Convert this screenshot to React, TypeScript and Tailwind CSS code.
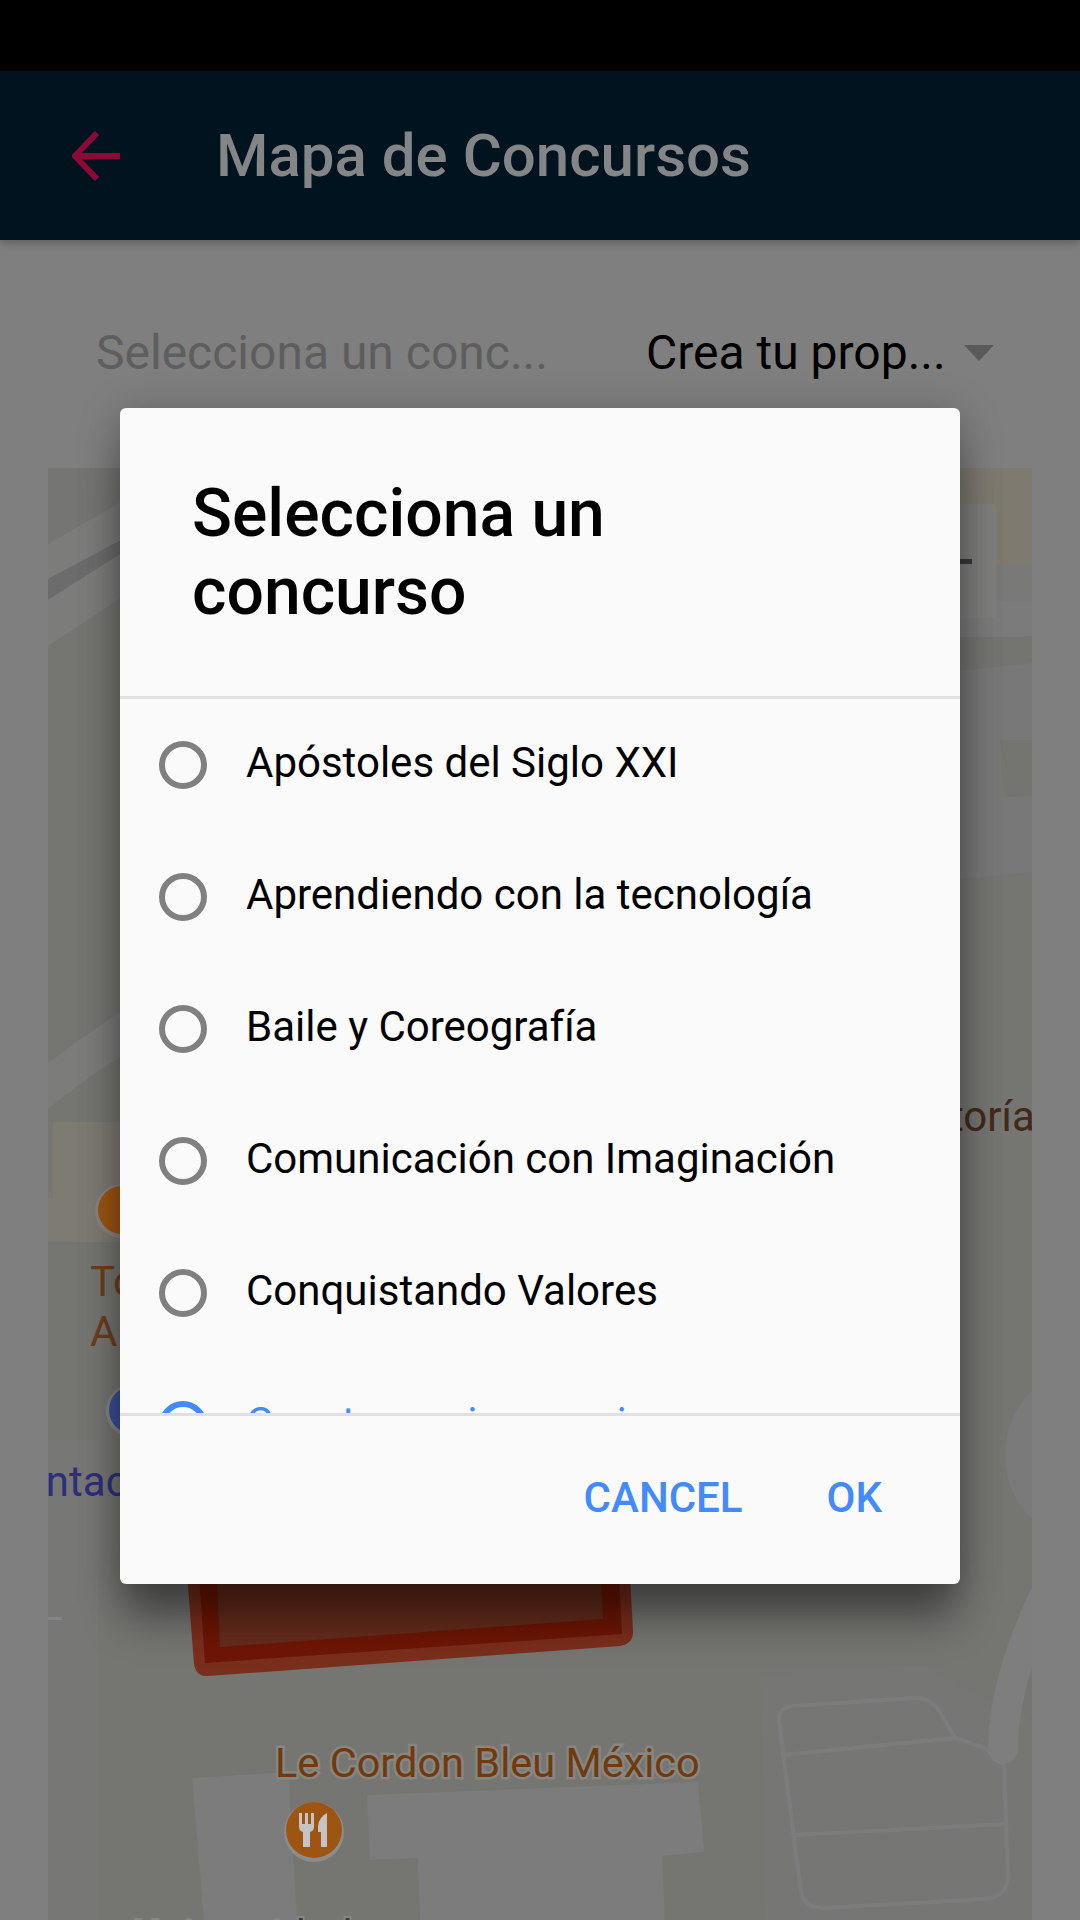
const font = { fontFamily: "Roboto, sans-serif" };

const contests = [
  "Apóstoles del Siglo XXI",
  "Aprendiendo con la tecnología",
  "Baile y Coreografía",
  "Comunicación con Imaginación",
  "Conquistando Valores",
];

function Radio({ selected }: { selected?: boolean }) {
  return (
    <span
      className={`flex h-[48px] w-[48px] shrink-0 items-center justify-center rounded-full border-[6px] ${
        selected ? "border-[#448aff]" : "border-[#808080]"
      }`}
    >
      {selected && <span className="h-[24px] w-[24px] rounded-full bg-[#448aff]" />}
    </span>
  );
}

function MapCanvas() {
  return (
    <svg viewBox="48 468 984 1452" className="h-full w-full" style={font}>
      <rect x="48" y="468" width="984" height="1452" fill="#757572" />

      {/* top left roads */}
      <path d="M48 468H125V500L48 544Z" fill="#757574" />
      <path d="M48 544L125 500V538L48 579Z" fill="#7c7c7b" />
      <path d="M48 579L125 538V551L48 600Z" fill="#6c6c6c" />
      <path d="M48 600L125 551V595L48 646Z" fill="#7c7c7b" />
      <path d="M48 1063Q85 1035 125 1009V1054Q85 1078 48 1109Z" fill="#7c7c7b" />

      {/* left road */}
      <rect x="48" y="1440" width="50" height="480" fill="#777775" />
      <rect x="48" y="1617" width="14" height="3" fill="#858585" />

      {/* left block and pins */}
      <rect x="48" y="1122" width="90" height="120" fill="#7e7b73" />
      <rect x="48" y="1122" width="5" height="76" fill="#787873" />
      <circle cx="122" cy="1211" r="27" fill="#868686" />
      <circle cx="122" cy="1210" r="24" fill="#9e5512" />
      <text x="90" y="1296" fontSize="42" fill="#6c3e1c">To</text>
      <text x="90" y="1346" fontSize="42" fill="#6c3e1c">A</text>
      <circle cx="133" cy="1411" r="27" fill="#868686" />
      <circle cx="133" cy="1410" r="24" fill="#3b4f99" />
      <text x="23" y="1496" fontSize="42" fill="#2c2f7c">antac</text>

      {/* top right */}
      <rect x="950" y="468" width="82" height="96" fill="#7e7a70" />
      <rect x="950" y="563" width="82" height="38" fill="#797a77" />
      <rect x="950" y="601" width="82" height="36" fill="#7b7b7c" />
      <path d="M950 640L1032 636V663L950 672Z" fill="#747471" />
      <path d="M950 672L1032 663V872L950 880Z" fill="#787878" />
      <path d="M1000 740H1032V796L1004 797Z" fill="#747471" />
      <rect x="940" y="504" width="56" height="114" rx="4" fill="#7e7e7d" />
      <rect x="950" y="559" width="22" height="5" fill="#3a3a3a" />
      <text x="950" y="1131" fontSize="42" fill="#42291a">toría</text>
      <circle cx="1095" cy="1455" r="90" fill="#7a7a7a" />

      {/* red building */}
      <path d="M186 1560H629L633 1630Q634 1644 620 1646L208 1676Q196 1677 194 1664Z" fill="#7a2e1c" />
      <path d="M198 1560H618L622 1634L205 1663Z" fill="#6e1605" />
      <path d="M216 1560H600L603 1619L220 1647Z" fill="#642c1c" />

      {/* lower buildings */}
      <path d="M192 1778L288 1772L297 1920H204Z" fill="#7c7c7c" />
      <path d="M367 1795L698 1782L704 1852L662 1856L665 1920H420L418 1858L370 1860Z" fill="#7c7c7c" />
      <path d="M760 1675L923 1665L1032 1720V1920H765Z" fill="#767675" />
      <path
        d="M792 1706L915 1698Q930 1697 940 1712L955 1738L985 1748L1004 1765L1008 1875Q1008 1897 985 1899L825 1908Q805 1909 801 1892L779 1722Q778 1708 792 1706Z"
        fill="none"
        stroke="#7c7c7c"
        strokeWidth="4"
      />
      <path d="M783 1755L955 1738M795 1835L1006 1824" fill="none" stroke="#7c7c7c" strokeWidth="4" />
      <path d="M1042 1600C1020 1650 1003 1700 1003 1749" fill="none" stroke="#7e7e7e" strokeWidth="30" strokeLinecap="round" />

      {/* restaurant label */}
      <text
        x="275"
        y="1777"
        fontSize="41.5"
        fill="#703a0e"
        stroke="#868682"
        strokeWidth="5"
        style={{ paintOrder: "stroke" }}
      >
        Le Cordon Bleu México
      </text>
      <circle cx="314" cy="1832" r="30" fill="#8c8c8c" />
      <circle cx="314" cy="1830" r="28" fill="#9e5512" />
      <path
        d="M299 1813H302V1824H305V1813H308V1824H311V1813H314V1827Q314 1831 310 1832V1847H303V1832Q299 1831 299 1827Z"
        fill="#c4c4c4"
      />
      <path d="M327 1813V1847H321V1832H318V1826Q319 1817 327 1813Z" fill="#c4c4c4" />
      <text
        x="133"
        y="1950"
        fontSize="42"
        fill="#3a3a3a"
        stroke="#868682"
        strokeWidth="4"
        style={{ paintOrder: "stroke" }}
      >
        Universidad
      </text>
    </svg>
  );
}

export default function App() {
  return (
    <div className="relative flex h-[1920px] w-[1080px] flex-col overflow-hidden bg-[#7f7f7f]" style={font}>
      <div className="h-[71px] shrink-0 bg-black" />

      <header className="flex h-[169px] shrink-0 items-center bg-[#00131f] shadow-[0_3px_8px_rgba(0,0,0,0.25)]">
        <svg viewBox="0 0 48 50" className="ml-[72px] h-[50px] w-[48px]" fill="none" stroke="#8c0a36" strokeWidth="6">
          <path d="M48 25H4" />
          <path d="M25 2L3 25L25 48" />
        </svg>
        <h1 className="ml-[96px] text-[60px] font-medium leading-none text-[#838587]">Mapa de Concursos</h1>
      </header>

      <div className="flex h-[228px] shrink-0 items-center pb-[2px]">
        <span className="ml-[96px] w-[550px] text-[48px] leading-none text-[#5e5e5e]">Selecciona un conc...</span>
        <span className="text-[48px] leading-none text-black">Crea tu prop...</span>
        <span className="ml-[18px] h-0 w-0 border-x-[15px] border-t-[16px] border-x-transparent border-t-[#5a5a5a]" />
      </div>

      <div className="mx-[48px] min-h-0 flex-1 overflow-hidden">
        <MapCanvas />
      </div>

      <div className="absolute left-[120px] top-[408px] flex h-[1176px] w-[840px] flex-col rounded-[6px] bg-[#fafafa] shadow-[0_40px_40px_-6px_rgba(0,0,0,0.38),0_6px_40px_0_rgba(0,0,0,0.25)]">
        <h2 className="h-[288px] shrink-0 pl-[72px] pr-[200px] pt-[67px] text-[66px] font-medium leading-[78px] text-black">
          Selecciona un concurso
        </h2>
        <div className="h-[3px] shrink-0 bg-[#e0e0e0]" />
        <ul className="min-h-0 flex-1 overflow-hidden">
          {contests.map((name) => (
            <li key={name} className="flex h-[132px] items-center pl-[39px]">
              <Radio />
              <span className="mb-[4px] ml-[39px] text-[42px] leading-none text-black">{name}</span>
            </li>
          ))}
          <li className="flex h-[132px] items-center pl-[39px]">
            <Radio selected />
            <span className="mb-[4px] ml-[39px] text-[42px] leading-none text-[#448aff]">Cuentos en imagen inmensa</span>
          </li>
        </ul>
        <div className="h-[3px] shrink-0 bg-[#e0e0e0]" />
        <div className="flex h-[168px] shrink-0 items-center justify-end pb-[5px] pr-[78px] text-[42px] font-medium leading-none text-[#448aff]">
          <span>CANCEL</span>
          <span className="ml-[84px]">OK</span>
        </div>
      </div>
    </div>
  );
}
